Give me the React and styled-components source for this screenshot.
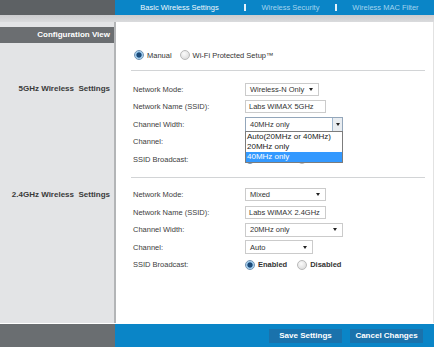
import React from 'react';
import styled, { createGlobalStyle } from 'styled-components';

const BLUE = '#0a85c7';
const GRAY_DARK = '#5d6164';
const SIDE_BG = '#e3e4e6';

const GlobalStyle = createGlobalStyle`
  html, body {
    margin: 0;
    padding: 0;
  }
  body {
    font-family: "Liberation Sans", Arial, sans-serif;
    background: #fff;
  }
`;

const Page = styled.div`
  width: 434px;
  height: 347px;
  display: flex;
  flex-direction: column;
  overflow: hidden;
`;

const TopBar = styled.div`
  flex: none;
  display: grid;
  grid-template-columns: 115px 1fr;
  height: 15px;
`;

const TopLeft = styled.div`
  background: ${GRAY_DARK};
`;

const Tabs = styled.nav`
  display: flex;
  align-items: center;
  background: ${BLUE};
`;

const Tab = styled.span`
  width: ${(p) => p.$w}px;
  text-align: center;
  font-size: 7.5px;
  white-space: nowrap;
  color: ${(p) => (p.$active ? '#eef8fd' : '#a3d4ef')};
`;

const TabSep = styled.span`
  width: 2px;
  height: 7px;
  background: #e4f2fb;
`;

const Strip = styled.div`
  flex: none;
  height: 7px;
  background: linear-gradient(#cbccce, #dadbdd);
`;

const Main = styled.div`
  flex: 1;
  display: grid;
  grid-template-columns: 114px 1fr;
  grid-template-rows: auto auto auto 1fr;
`;

const Side = styled.div`
  background: ${SIDE_BG};
`;

const Pane = styled.div`
  background: #fff;
  border-left: 2px solid #b3b5b7;
  border-right: 1px solid #e2e2e2;
  padding: ${(p) => p.$pad || '0'};
  padding-left: 15px;
  padding-right: 8px;
`;

const ConfigBar = styled.div`
  margin-top: 5px;
  height: 16px;
  line-height: 16px;
  background: #6b6e71;
  color: #fff;
  font-weight: bold;
  font-size: 8px;
  text-align: right;
  padding-right: 4px;
`;

const SectionTitle = styled.div`
  padding-top: ${(p) => p.$top}px;
  padding-right: 4px;
  line-height: 17.5px;
  text-align: right;
  font-weight: bold;
  font-size: 8px;
  color: #3a3a3a;
  white-space: pre;
`;

const RadioGroup = styled.div`
  display: flex;
  align-items: center;
  height: 12px;
  gap: ${(p) => p.$gap || 8}px;
  margin-left: ${(p) => p.$indent || 0}px;
`;

const RadioItem = styled.label`
  display: inline-flex;
  align-items: center;
  gap: 3px;
  font-size: 7.5px;
  color: #333;
  font-weight: ${(p) => (p.$bold ? 'bold' : 'normal')};
  white-space: nowrap;
`;

const RadioDot = styled.span`
  width: 8px;
  height: 8px;
  border-radius: 50%;
  border: 1px solid ${(p) => (p.$on ? '#6f93b4' : '#b9b9b9')};
  background: ${(p) =>
    p.$on
      ? 'radial-gradient(circle, #1d4a78 0 2.2px, #7fb6e0 2.9px, #e2eef7 4.5px)'
      : 'radial-gradient(circle at 40% 35%, #fbfbfb, #d4d4d4)'};
`;

const Form = styled.div`
  border-top: 1px solid #d2d4d6;
  padding: ${(p) => p.$top}px 0 ${(p) => p.$bottom}px 2px;
`;

const Row = styled.div`
  display: grid;
  grid-template-columns: 112px 1fr;
  align-items: center;
  height: 17.5px;
`;

const Label = styled.span`
  font-size: 7.5px;
  color: #3d3d3d;
  white-space: nowrap;
`;

const SelectBox = styled.div`
  position: relative;
  box-sizing: border-box;
  display: flex;
  align-items: center;
  justify-content: space-between;
  width: ${(p) => p.$w}px;
  height: ${(p) => p.$h || 13}px;
  border: 1px solid ${(p) => (p.$open ? '#93a6ba' : '#cbcbcb')};
  background: #fff;
  font-size: 7.5px;
  color: #333;
  padding-left: 4px;
`;

const Arrow = styled.span`
  width: 0;
  height: 0;
  margin-right: 5px;
  margin-left: auto;
  border-left: 2.5px solid transparent;
  border-right: 2.5px solid transparent;
  border-top: 3px solid #222;
`;

const ArrowButton = styled.span`
  align-self: stretch;
  width: 9px;
  display: flex;
  align-items: center;
  justify-content: center;
  background: #e9edf1;
  border-left: 1px solid #9fb8d2;
  & > span {
    margin: 0;
  }
`;

const OptionList = styled.ul`
  position: absolute;
  top: 100%;
  left: -1px;
  right: -1px;
  z-index: 2;
  margin: 0;
  padding: 0;
  list-style: none;
  background: #fff;
  border: 1px solid #7c7c7c;
`;

const Option = styled.li`
  height: 10px;
  line-height: 10px;
  padding-left: 1px;
  font-size: 8px;
  color: ${(p) => (p.$selected ? '#fff' : '#222')};
  background: ${(p) => (p.$selected ? '#3399ff' : 'transparent')};
`;

const TextBox = styled.div`
  box-sizing: border-box;
  width: ${(p) => p.$w}px;
  height: 13px;
  line-height: 11px;
  border: 1px solid #cbcbcb;
  padding-left: 3px;
  font-size: 7.5px;
  color: #333;
`;

const BottomBar = styled.div`
  flex: none;
  display: grid;
  grid-template-columns: 115px 1fr;
  height: 23px;
  border-top: 1px solid rgba(255, 255, 255, 0.45);
`;

const BottomLeft = styled.div`
  background: #6a6e71;
`;

const Actions = styled.div`
  display: flex;
  align-items: center;
  justify-content: flex-end;
  gap: 8px;
  padding-right: 11px;
  background: ${BLUE};
`;

const Button = styled.button`
  width: 73px;
  height: 14px;
  padding: 0;
  border: none;
  background: #1a72ac;
  color: #fff;
  font-family: inherit;
  font-weight: bold;
  font-size: 8px;
`;

const Select = ({ value, w, h }) => (
  <SelectBox $w={w} $h={h}>
    {value}
    <Arrow />
  </SelectBox>
);

const OpenSelect = ({ value, w, options }) => (
  <SelectBox $w={w} $h={15} $open>
    {value}
    <ArrowButton>
      <Arrow />
    </ArrowButton>
    <OptionList>
      {options.map((o) => (
        <Option key={o} $selected={o === value}>
          {o}
        </Option>
      ))}
    </OptionList>
  </SelectBox>
);

const Broadcast = () => (
  <RadioGroup $gap={10}>
    <RadioItem $bold>
      <RadioDot $on />
      Enabled
    </RadioItem>
    <RadioItem $bold>
      <RadioDot />
      Disabled
    </RadioItem>
  </RadioGroup>
);

export default function App() {
  return (
    <Page>
      <GlobalStyle />
      <TopBar>
        <TopLeft />
        <Tabs>
          <Tab $w={129} $active>Basic Wireless Settings</Tab>
          <TabSep />
          <Tab $w={89}>Wireless Security</Tab>
          <TabSep />
          <Tab $w={97}>Wireless MAC Filter</Tab>
        </Tabs>
      </TopBar>
      <Strip />
      <Main>
        <Side>
          <ConfigBar>Configuration View</ConfigBar>
        </Side>
        <Pane $pad="27px 0 9px">
          <RadioGroup $indent={3} $gap={8}>
            <RadioItem>
              <RadioDot $on />
              Manual
            </RadioItem>
            <RadioItem>
              <RadioDot />
              Wi-Fi Protected Setup™
            </RadioItem>
          </RadioGroup>
        </Pane>

        <Side>
          <SectionTitle $top={10.25}>{'5GHz Wireless  Settings'}</SectionTitle>
        </Side>
        <Pane>
          <Form $top={9.25} $bottom={9.25}>
            <Row>
              <Label>Network Mode:</Label>
              <Select value="Wireless-N Only" w={74} h={13} />
            </Row>
            <Row>
              <Label>Network Name (SSID):</Label>
              <TextBox $w={81}>Labs WiMAX 5GHz</TextBox>
            </Row>
            <Row>
              <Label>Channel Width:</Label>
              <OpenSelect
                value="40MHz only"
                w={98}
                options={['Auto(20MHz or 40MHz)', '20MHz only', '40MHz only']}
              />
            </Row>
            <Row>
              <Label>Channel:</Label>
              <Select w={68} h={14} />
            </Row>
            <Row>
              <Label>SSID Broadcast:</Label>
              <Broadcast />
            </Row>
          </Form>
        </Pane>

        <Side>
          <SectionTitle $top={8.75}>{'2.4GHz Wireless  Settings'}</SectionTitle>
        </Side>
        <Pane>
          <Form $top={7.75} $bottom={0}>
            <Row>
              <Label>Network Mode:</Label>
              <Select value="Mixed" w={81} h={13} />
            </Row>
            <Row>
              <Label>Network Name (SSID):</Label>
              <TextBox $w={81}>Labs WiMAX 2.4GHz</TextBox>
            </Row>
            <Row>
              <Label>Channel Width:</Label>
              <Select value="20MHz only" w={98} h={14} />
            </Row>
            <Row>
              <Label>Channel:</Label>
              <Select value="Auto" w={68} h={14} />
            </Row>
            <Row>
              <Label>SSID Broadcast:</Label>
              <Broadcast />
            </Row>
          </Form>
        </Pane>

        <Side />
        <Pane />
      </Main>
      <BottomBar>
        <BottomLeft />
        <Actions>
          <Button>Save Settings</Button>
          <Button>Cancel Changes</Button>
        </Actions>
      </BottomBar>
    </Page>
  );
}
